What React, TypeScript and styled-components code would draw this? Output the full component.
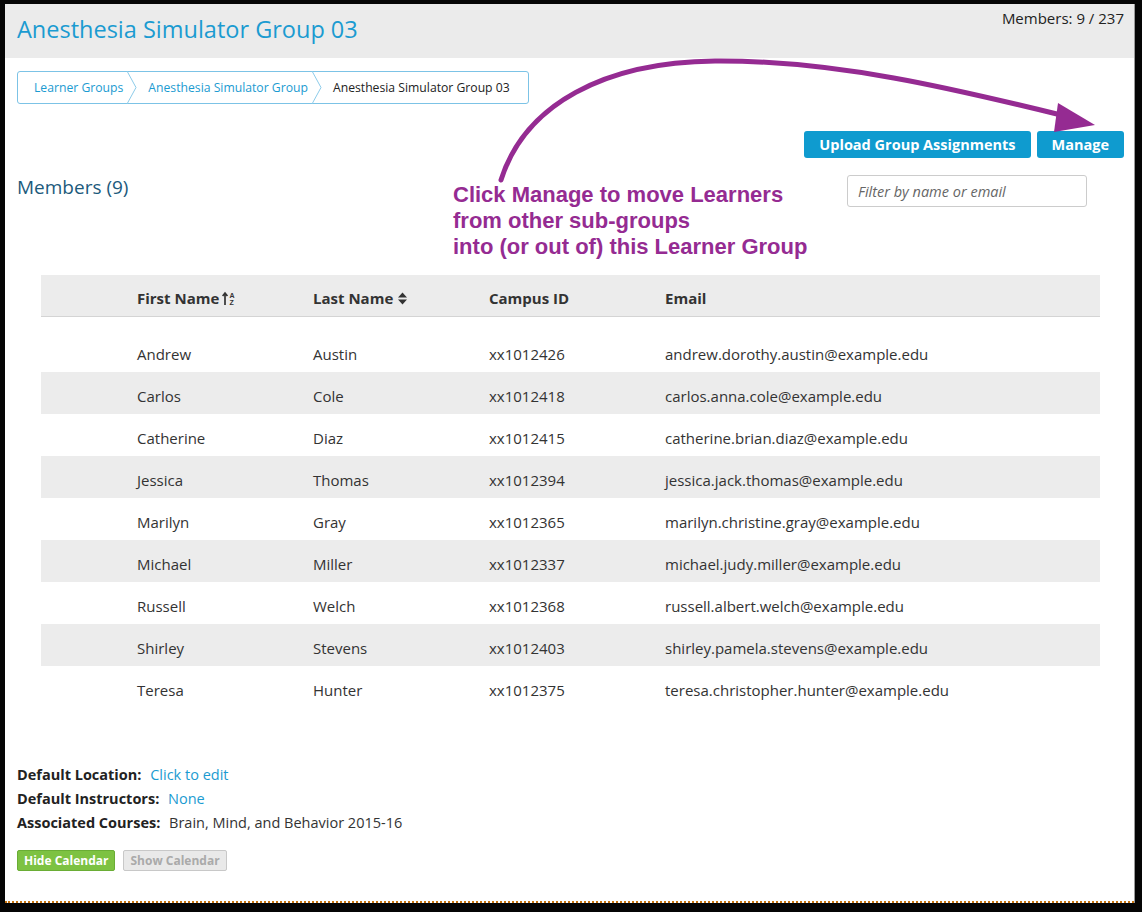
import React from "react";
import styled, { createGlobalStyle } from "styled-components";

const FONT = `"Open Sans", "Noto Sans", sans-serif`;

const Global = createGlobalStyle`
  html, body { margin: 0; padding: 0; background: #000; }
  body { font-family: ${FONT}; color: #333; }
  * { box-sizing: border-box; }
`;

const Frame = styled.div`
  width: 1142px;
  height: 912px;
  background: #050505;
  padding: 4px 8px 9px 5px;
`;

const Page = styled.div`
  position: relative;
  height: 100%;
  background: #fff;
  display: flex;
  flex-direction: column;
  border-bottom: 2px dotted #c8740f;
  box-shadow: 1px 0 0 #9a9a9a;
`;

const Header = styled.header`
  height: 54px;
  background: #ebebeb;
  display: flex;
  justify-content: space-between;
  align-items: flex-start;
  padding: 0 10px 0 12px;
`;

const Title = styled.h1`
  margin: 9px 0 0;
  font-size: 23.5px;
  font-weight: 400;
  color: #1b9bd1;
  line-height: 32px;
`;

const Count = styled.div`
  margin-top: 4px;
  font-size: 15px;
  color: #222;
`;

const Content = styled.main`
  padding: 0 10px 0 12px;
  display: flex;
  flex-direction: column;
`;

const Crumbs = styled.nav`
  margin-top: 13px;
  align-self: flex-start;
  height: 33px;
  border: 1px solid #7cc3e6;
  border-radius: 3px;
  display: flex;
  align-items: center;
  padding: 0 18px 0 16px;
  font-size: 12.2px;
`;

const Crumb = styled.span<{ $current?: boolean }>`
  color: ${(p) => (p.$current ? "#222" : "#1b9bd1")};
`;

const Sep = styled.svg`
  width: 12px;
  height: 33px;
  margin: 0 10px 0 3px;
  display: block;
`;

const ButtonRow = styled.div`
  margin-top: 27px;
  display: flex;
  justify-content: flex-end;
  gap: 6px;
`;

const BlueButton = styled.button`
  height: 27px;
  padding: 0 15px;
  border: none;
  border-radius: 3px;
  background: #0f9bcf;
  color: #fff;
  font-family: ${FONT};
  font-weight: 700;
  font-size: 14.5px;
`;

const MembersRow = styled.div`
  margin-top: 17px;
  display: flex;
  justify-content: space-between;
  align-items: flex-start;
  padding-right: 37px;
`;

const MembersTitle = styled.h2`
  margin: 0;
  font-size: 19px;
  line-height: 24px;
  font-weight: 400;
  color: #1c5a7c;
`;

const Filter = styled.input`
  width: 240px;
  height: 32px;
  border: 1px solid #ccc;
  border-radius: 3px;
  padding: 0 10px;
  font-family: ${FONT};
  font-size: 14.5px;
  &::placeholder { color: #666; font-style: italic; }
`;

const Table = styled.div`
  margin: 68px 24px 0;
`;

const Row = styled.div<{ $head?: boolean; $shade?: boolean }>`
  display: grid;
  grid-template-columns: 96px 176px 176px 176px 1fr;
  align-items: center;
  height: 42px;
  padding-top: 5px;
  background: ${(p) => (p.$head || p.$shade ? "#ececec" : "#fff")};
  border-bottom: ${(p) => (p.$head ? "1px solid #d4d4d4" : "none")};
  font-size: 15px;
  font-weight: ${(p) => (p.$head ? 700 : 400)};
  color: #333;
`;

const Spacer = styled.div`
  height: 13px;
`;

const SortIcon = styled.svg`
  width: 15px;
  height: 15px;
  margin-left: 3px;
  vertical-align: -2px;
`;

const Info = styled.div`
  margin-top: 57px;
  display: flex;
  flex-direction: column;
  gap: 4px;
  font-size: 14.5px;
`;

const InfoLine = styled.div`
  line-height: 20px;
`;

const Label = styled.b`
  color: #222;
  margin-right: 5px;
`;

const Link = styled.span`
  color: #1b9bd1;
`;

const CalRow = styled.div`
  margin-top: 17px;
  display: flex;
  gap: 8px;
`;

const CalButton = styled.button<{ $on?: boolean }>`
  height: 21px;
  padding: 0 6px;
  border-radius: 2px;
  font-family: ${FONT};
  font-weight: 700;
  font-size: 12px;
  background: ${(p) => (p.$on ? "#7dc242" : "#e9e9e9")};
  color: ${(p) => (p.$on ? "#fff" : "#aaa")};
  border: 1px solid ${(p) => (p.$on ? "#6aad35" : "#c8c8c8")};
`;

const Annotation = styled.div`
  position: absolute;
  left: 448px;
  top: 178px;
  font-family: "Liberation Sans", Arial, sans-serif;
  font-weight: 700;
  font-size: 22px;
  line-height: 26px;
  color: #952b92;
`;

const ArrowLayer = styled.svg`
  position: absolute;
  left: 0;
  top: 0;
  width: 1129px;
  height: 300px;
  pointer-events: none;
`;

const rows = [
  ["Andrew", "Austin", "xx1012426", "andrew.dorothy.austin@example.edu"],
  ["Carlos", "Cole", "xx1012418", "carlos.anna.cole@example.edu"],
  ["Catherine", "Diaz", "xx1012415", "catherine.brian.diaz@example.edu"],
  ["Jessica", "Thomas", "xx1012394", "jessica.jack.thomas@example.edu"],
  ["Marilyn", "Gray", "xx1012365", "marilyn.christine.gray@example.edu"],
  ["Michael", "Miller", "xx1012337", "michael.judy.miller@example.edu"],
  ["Russell", "Welch", "xx1012368", "russell.albert.welch@example.edu"],
  ["Shirley", "Stevens", "xx1012403", "shirley.pamela.stevens@example.edu"],
  ["Teresa", "Hunter", "xx1012375", "teresa.christopher.hunter@example.edu"],
];

const Chevron = () => (
  <Sep viewBox="0 0 12 33">
    <path d="M1 0 L10 16.5 L1 33" fill="none" stroke="#8ccbea" strokeWidth="1" />
  </Sep>
);

export default function App() {
  return (
    <Frame>
      <Global />
      <Page>
        <Header>
          <Title>Anesthesia Simulator Group 03</Title>
          <Count>Members: 9 / 237</Count>
        </Header>
        <Content>
          <Crumbs>
            <Crumb>Learner Groups</Crumb>
            <Chevron />
            <Crumb>Anesthesia Simulator Group</Crumb>
            <Chevron />
            <Crumb $current>Anesthesia Simulator Group 03</Crumb>
          </Crumbs>
          <ButtonRow>
            <BlueButton>Upload Group Assignments</BlueButton>
            <BlueButton>Manage</BlueButton>
          </ButtonRow>
          <MembersRow>
            <MembersTitle>Members (9)</MembersTitle>
            <Filter placeholder="Filter by name or email" />
          </MembersRow>
          <Table>
            <Row $head>
              <span />
              <span>
                First Name
                <SortIcon viewBox="0 0 15 15">
                  <path d="M3 14 V2.5 M0.6 5 L3 2 L5.4 5" stroke="#333" strokeWidth="1.7" fill="none" />
                  <text x="7.5" y="6.8" fontSize="7" fontWeight="700" fill="#333" fontFamily="Liberation Sans">A</text>
                  <text x="7.5" y="14" fontSize="7" fontWeight="700" fill="#333" fontFamily="Liberation Sans">Z</text>
                </SortIcon>
              </span>
              <span>
                Last Name
                <SortIcon viewBox="0 0 15 15">
                  <path d="M2 6.5 L6.5 1.5 L11 6.5 Z M2 8.5 L6.5 13.5 L11 8.5 Z" fill="#333" />
                </SortIcon>
              </span>
              <span>Campus ID</span>
              <span>Email</span>
            </Row>
            <Spacer />
            {rows.map((r, i) => (
              <Row key={r[2]} $shade={i % 2 === 1}>
                <span />
                {r.map((c) => (
                  <span key={c}>{c}</span>
                ))}
              </Row>
            ))}
          </Table>
          <Info>
            <InfoLine>
              <Label>Default Location:</Label> <Link>Click to edit</Link>
            </InfoLine>
            <InfoLine>
              <Label>Default Instructors:</Label> <Link>None</Link>
            </InfoLine>
            <InfoLine>
              <Label>Associated Courses:</Label> Brain, Mind, and Behavior 2015-16
            </InfoLine>
          </Info>
          <CalRow>
            <CalButton $on>Hide Calendar</CalButton>
            <CalButton>Show Calendar</CalButton>
          </CalRow>
        </Content>
        <Annotation>
          Click Manage to move Learners
          <br />
          from other sub-groups
          <br />
          into (or out of) this Learner Group
        </Annotation>
        <ArrowLayer viewBox="0 0 1129 300">
          <path
            d="M496 176 C 520 100, 600 58, 710 57 C 830 56, 950 85, 1060 112"
            fill="none"
            stroke="#952b92"
            strokeWidth="5"
            strokeLinecap="round"
          />
          <polygon points="1053,99 1090,121 1049,128" fill="#952b92" />
        </ArrowLayer>
      </Page>
    </Frame>
  );
}
